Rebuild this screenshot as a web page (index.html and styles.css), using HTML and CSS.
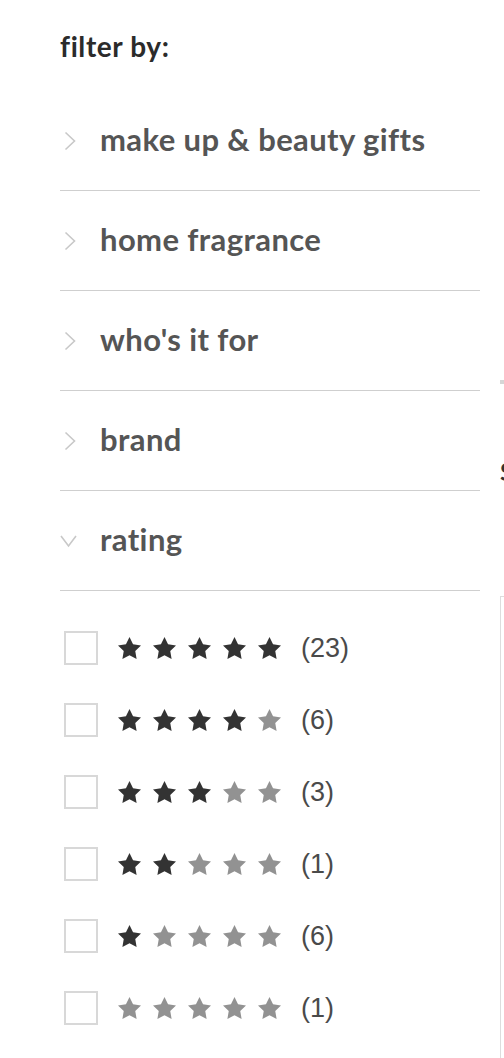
FILE: index.html
```html
<!DOCTYPE html>
<html lang="en">
<head>
    <meta charset="UTF-8">
    <title>Filter by</title>
    <link rel="stylesheet" href="styles.css">
</head>
<body>
    <div class="page">
        <aside class="filters">
            <h3 class="filters-title">filter by:</h3>
            <ul class="facets">
                <li class="facet">
                    <svg class="chevron" width="20" height="20" viewBox="0 0 20 20"><path d="M5.5 1.5 L14.5 10 L5.5 18.5" /></svg>
                    <span class="facet-name">make up &amp; beauty gifts</span>
                </li>
                <li class="facet">
                    <svg class="chevron" width="20" height="20" viewBox="0 0 20 20"><path d="M5.5 1.5 L14.5 10 L5.5 18.5" /></svg>
                    <span class="facet-name">home fragrance</span>
                </li>
                <li class="facet">
                    <svg class="chevron" width="20" height="20" viewBox="0 0 20 20"><path d="M5.5 1.5 L14.5 10 L5.5 18.5" /></svg>
                    <span class="facet-name">who's it for</span>
                </li>
                <li class="facet">
                    <svg class="chevron" width="20" height="20" viewBox="0 0 20 20"><path d="M5.5 1.5 L14.5 10 L5.5 18.5" /></svg>
                    <span class="facet-name">brand</span>
                </li>
                <li class="facet open">
                    <svg class="chevron" width="20" height="20" viewBox="0 0 20 20"><path d="M1 5 L8.5 15 L16 5" /></svg>
                    <span class="facet-name">rating</span>
                </li>
            </ul>

            <ul class="ratings" id="ratings"></ul>
        </aside>

        <main class="results">
            <div class="toolbar-line"></div>
            <h2 class="results-title">Sort by</h2>
            <div class="product-box"></div>
        </main>
    </div>

    <script>
        const counts = [23, 6, 3, 1, 6, 1];
        const starPath = 'M12 2l3.09 6.26L22 9.27l-5 4.87 1.18 6.88L12 17.77l-6.18 3.25L7 14.14 2 9.27l6.91-1.01L12 2z';
        const list = document.getElementById('ratings');

        counts.forEach(function (count, i) {
            const filled = 5 - i;
            let stars = '';
            for (let s = 0; s < 5; s++) {
                const cls = s < filled ? 'star on' : 'star';
                stars += '<svg class="' + cls + '" width="23" height="22" viewBox="2 2 20 19"><path d="' + starPath + '"/></svg>';
            }
            const li = document.createElement('li');
            li.className = 'rating-row';
            li.innerHTML = '<span class="checkbox"></span><span class="stars">' + stars + '</span><span class="count">(' + count + ')</span>';
            list.appendChild(li);
        });
    </script>
</body>
</html>
```

FILE: styles.css
```css
body {
    margin: 0;
    background-color: #fff;
    font-family: Lato, "Open Sans", sans-serif;
    overflow: hidden;
}
.page {
    display: flex;
    gap: 20px;
    padding-left: 60px;
    width: 504px;
    box-sizing: border-box;
}
.filters {
    width: 420px;
    flex-shrink: 0;
}
.filters-title {
    margin: 0;
    height: 91px;
    padding-top: 28px;
    box-sizing: border-box;
    font-size: 28px;
    line-height: 36px;
    letter-spacing: 0.6px;
    font-weight: 700;
    color: #2b2b2b;
}
.facets,
.ratings {
    list-style: none;
    margin: 0;
    padding: 0;
}
.facet {
    display: flex;
    align-items: center;
    gap: 20px;
    height: 100px;
    box-sizing: border-box;
    border-bottom: 1px solid #cfcfcf;
}
.chevron {
    flex-shrink: 0;
}
.chevron path {
    fill: none;
    stroke: #c8c8c8;
    stroke-width: 1.6;
}
.facet-name {
    font-size: 31px;
    letter-spacing: 0.4px;
    font-weight: 700;
    color: #555;
    margin-bottom: 4px;
}
.ratings {
    padding-top: 21px;
}
.rating-row {
    display: flex;
    align-items: center;
    height: 72px;
}
.checkbox {
    width: 34px;
    height: 34px;
    box-sizing: border-box;
    border: 2px solid #d8d8d8;
    margin-left: 4px;
    margin-right: 20px;
}
.stars {
    display: flex;
    gap: 12px;
    margin-right: 20px;
}
.star path {
    fill: #929292;
}
.star.on path {
    fill: #333;
}
.count {
    font-family: "Liberation Sans", Arial, sans-serif;
    font-size: 27px;
    color: #4a4a4a;
}
.results {
    width: 300px;
    flex-shrink: 0;
}
.toolbar-line {
    margin-top: 380px;
    height: 4px;
    width: 60px;
    background-color: #d6d6d6;
}
.results-title {
    margin: 72px 0 0;
    font-size: 25px;
    line-height: 30px;
    font-weight: 700;
    color: #333;
}
.product-box {
    margin-top: 110px;
    height: 600px;
    border: 1px solid #ddd;
}
```
